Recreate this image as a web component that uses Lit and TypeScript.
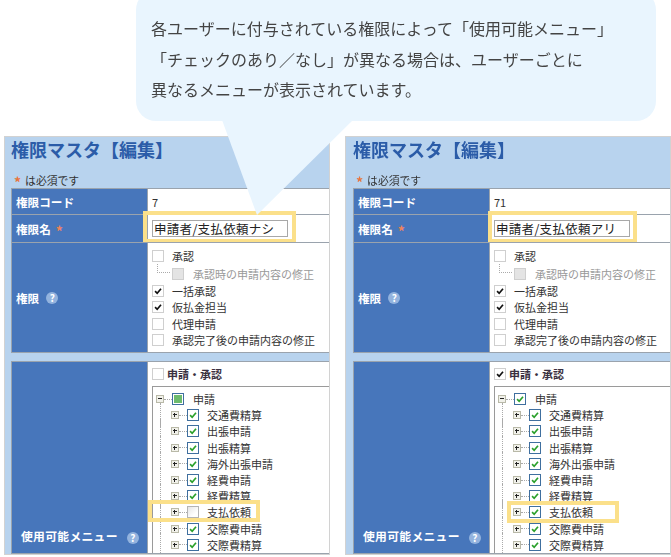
import { LitElement, html, css, svg } from "lit";

const check = svg`<path d="M2.5 6.2 L5 8.8 L9.6 3.2" fill="none" stroke-width="2"/>`;

const PERMS = [
  { label: "承認", checked: false, sub: false, dim: false },
  { label: "承認時の申請内容の修正", checked: false, sub: true, dim: true },
  { label: "一括承認", checked: true, sub: false, dim: false },
  { label: "仮払金担当", checked: true, sub: false, dim: false },
  { label: "代理申請", checked: false, sub: false, dim: false },
  { label: "承認完了後の申請内容の修正", checked: false, sub: false, dim: false },
];

const MENUS = [
  "交通費精算",
  "出張申請",
  "出張精算",
  "海外出張申請",
  "経費申請",
  "経費精算",
  "支払依頼",
  "交際費申請",
  "交際費精算",
];

/** <perm-panel> — one 権限マスタ edit form as it looks in the screenshot. */
export class PermPanel extends LitElement {
  static properties = {
    code: { type: String },
    name: { type: String },
    granted: { type: Boolean, reflect: true },
  };

  declare code: string;
  declare name: string;
  declare granted: boolean;

  constructor() {
    super();
    this.code = "";
    this.name = "";
    this.granted = false;
  }

  static styles = css`
    :host {
      display: block;
      width: 326px;
      height: 419px;
      box-sizing: border-box;
      background: #b8d3ee;
      border: 1px solid #d2d2d2;
      padding: 0 0 0 6px;
      overflow: hidden;
      font-family: "Noto Sans CJK JP", "Noto Sans", sans-serif;
      color: #333;
    }
    :host([granted]) {
      padding-left: 7px;
    }
    h1 {
      margin: 0;
      height: 26px;
      font-size: 18px;
      line-height: 24px;
      font-weight: 700;
      color: #2b5ca8;
    }
    .note {
      margin: 9px 0 0 3px;
      height: 16px;
      font-size: 10.8px;
      line-height: 16px;
      display: flex;
      gap: 4px;
      align-items: center;
    }
    .ast {
      color: #e8743c;
      font-weight: 700;
      font-size: 14px;
      line-height: 14px;
      height: 10px;
    }
    .row {
      display: flex;
      border: 1px solid #9aa3ad;
      border-right: 0;
      margin-top: -1px;
      background: #fff;
      position: relative;
    }
    .head {
      width: 136px;
      flex: none;
      box-sizing: border-box;
      background: #4776bb;
      color: #fff;
      font-weight: 700;
      font-size: 11.6px;
      padding-left: 4px;
      display: flex;
      align-items: center;
      gap: 5px;
      border-right: 1px solid #9aa3ad;
    }
    .head .ast {
      color: #f0835a;
    }
    .body {
      flex: 1;
      min-width: 0;
      padding-left: 4px;
      font-size: 11px;
      display: flex;
      align-items: center;
    }
    .r1 {
      height: 25px;
      margin-top: 0;
    }
    .r2 {
      height: 27px;
    }
    .name {
      width: 136px;
      height: 17px;
      box-sizing: border-box;
      border: 1px solid #a8a8a8;
      background: #fff;
      padding-left: 1px;
      font-size: 12.5px;
      line-height: 15px;
      letter-spacing: 0.3px;
      white-space: nowrap;
      color: #222;
    }
    .r3 {
      height: 109px;
    }
    .perms {
      flex-direction: column;
      align-items: flex-start;
      justify-content: flex-start;
      padding-top: 5px;
    }
    .perm {
      display: flex;
      align-items: center;
      height: 16.4px;
      gap: 8px;
      white-space: nowrap;
    }
    .perm.sub {
      margin-left: 20px;
      height: 18.4px;
      gap: 9px;
      position: relative;
    }
    .perm.sub::before {
      content: "";
      position: absolute;
      left: -15px;
      top: 0;
      width: 12px;
      height: 8px;
      border-left: 1px dotted #aaa;
      border-bottom: 1px dotted #aaa;
    }
    .perm.dim {
      color: #999;
    }
    .cb {
      width: 12px;
      height: 12px;
      box-sizing: border-box;
      border: 1px solid #cfcfcf;
      background: #fff;
      flex: none;
      display: block;
    }
    .cb.dis {
      background: #e4e4e4;
    }
    .cb svg {
      display: block;
      width: 10px;
      height: 10px;
      stroke: #111;
    }
    .gap {
      height: 8px;
    }
    .r4 {
      height: 191px;
      margin-top: 0;
    }
    .r4 .head {
      align-items: flex-end;
      padding: 0 0 9px 9px;
      font-size: 11.8px;
      letter-spacing: 0.3px;
      gap: 7px;
    }
    .menu {
      flex-direction: column;
      align-items: stretch;
      padding-top: 5px;
      overflow: hidden;
    }
    .group {
      display: flex;
      align-items: center;
      gap: 3px;
      height: 14px;
      margin-bottom: 5px;
      font-weight: 700;
      font-size: 11px;
      color: #3a3040;
    }
    .tree {
      flex: 1;
      border: 1px solid #9a9a9a;
      border-right: 0;
      border-bottom: 0;
      padding-top: 4px;
    }
    .node {
      display: flex;
      align-items: center;
      height: 16.2px;
      white-space: nowrap;
      position: relative;
    }
    .node.top {
      padding-left: 3px;
    }
    .node.top .lbl {
      margin-left: 9px;
    }
    .node.child {
      padding-left: 18px;
    }
    .node.child::before {
      content: "";
      position: absolute;
      left: 7px;
      top: -4px;
      bottom: -4px;
      border-left: 1px dotted #aaa;
    }
    .exp {
      width: 8px;
      height: 8px;
      box-sizing: border-box;
      border: 1px solid #b9b9a8;
      background: #f1f1ea;
      position: relative;
      flex: none;
    }
    .exp::before {
      content: "";
      position: absolute;
      left: 1px;
      right: 1px;
      top: 2px;
      height: 1px;
      background: #222;
    }
    .exp.plus::after {
      content: "";
      position: absolute;
      top: 1px;
      bottom: 1px;
      left: 2px;
      width: 1px;
      background: #222;
    }
    .dots {
      width: 8px;
      flex: none;
      border-top: 1px dotted #aaa;
    }
    .tc {
      width: 12px;
      height: 12px;
      box-sizing: border-box;
      border: 1px solid #3f6f9f;
      background: #fff;
      flex: none;
      display: flex;
      align-items: center;
      justify-content: center;
    }
    .tc.off {
      border-color: #b4b4b4;
      background: linear-gradient(135deg, #e6e6e6, #fff 70%);
    }
    .tc svg {
      display: block;
      width: 10px;
      height: 10px;
      stroke: #2aa02a;
    }
    .tc i {
      display: block;
      width: 8px;
      height: 8px;
      background: #6dbb6d;
    }
    .lbl {
      margin-left: 8px;
    }
    .help {
      width: 12px;
      height: 12px;
      border-radius: 50%;
      background: #93b3de;
      color: #fff;
      font-size: 10px;
      line-height: 12px;
      text-align: center;
      font-weight: 700;
      flex: none;
      margin-left: 2px;
      letter-spacing: 0;
    }
    .hl {
      position: absolute;
      box-sizing: border-box;
      border: 4px solid #fbe08a;
      pointer-events: none;
    }
    .hl.name-off {
      left: 131px;
      top: -4px;
      width: 153px;
      height: 32px;
    }
    .hl.name-on {
      left: 134px;
      top: -4px;
      width: 149px;
      height: 32px;
    }
    .hl.menu-off {
      left: 136px;
      top: 138px;
      width: 112px;
      height: 22px;
    }
    .hl.menu-on {
      left: 153px;
      top: 139px;
      width: 112px;
      height: 22px;
    }
  `;

  private renderPerm(p: (typeof PERMS)[number]) {
    return html`<div class="perm ${p.sub ? "sub" : ""} ${p.dim ? "dim" : ""}">
      <span class="cb ${p.dim ? "dis" : ""}"
        >${p.checked ? html`<svg viewBox="0 0 12 12">${check}</svg>` : ""}</span
      >
      <span>${p.label}</span>
    </div>`;
  }

  private renderMenu(label: string) {
    const on = this.granted || label !== "支払依頼";
    return html`<div class="node child">
      <span class="exp plus"></span><span class="dots"></span>
      <span class="tc ${on ? "" : "off"}"
        >${on ? html`<svg viewBox="0 0 12 12">${check}</svg>` : ""}</span
      >
      <span class="lbl">${label}</span>
    </div>`;
  }

  render() {
    const mode = this.granted ? "on" : "off";
    return html`
      <h1>権限マスタ【編集】</h1>
      <div class="note"><span class="ast">*</span><span>は必須です</span></div>
      <div class="row r1">
        <div class="head">権限コード</div>
        <div class="body">${this.code}</div>
      </div>
      <div class="row r2">
        <div class="head">権限名<span class="ast">*</span></div>
        <div class="body"><div class="name">${this.name}</div></div>
        <div class="hl name-${mode}"></div>
      </div>
      <div class="row r3">
        <div class="head">権限<span class="help">?</span></div>
        <div class="body perms">${PERMS.map((p) => this.renderPerm(p))}</div>
      </div>
      <div class="gap"></div>
      <div class="row r4">
        <div class="head">使用可能メニュー<span class="help">?</span></div>
        <div class="body menu">
          <div class="group">
            <span class="cb"
              >${this.granted ? html`<svg viewBox="0 0 12 12">${check}</svg>` : ""}</span
            >
            <span>申請・承認</span>
          </div>
          <div class="tree">
            <div class="node top">
              <span class="exp"></span><span class="dots"></span>
              <span class="tc"
                >${this.granted ? html`<svg viewBox="0 0 12 12">${check}</svg>` : html`<i></i>`}</span
              >
              <span class="lbl">申請</span>
            </div>
            ${MENUS.map((m) => this.renderMenu(m))}
          </div>
        </div>
        <div class="hl menu-${mode}"></div>
      </div>
    `;
  }
}
customElements.define("perm-panel", PermPanel);

export class AppRoot extends LitElement {
  static styles = css`
    :host {
      display: block;
      position: relative;
      width: 671px;
      height: 557px;
      overflow: hidden;
      background: #fff;
      font-family: "Noto Sans CJK JP", "Noto Sans", sans-serif;
    }
    .panels {
      display: flex;
      gap: 15px;
      padding: 136px 0 0 4px;
      filter: blur(0.3px);
    }
    .bubble {
      position: absolute;
      left: 136px;
      top: -10px;
      width: 520px;
      height: 131px;
      box-sizing: border-box;
      padding: 23px 0 0 15px;
      border-radius: 20px;
      background: #e9f5fe;
      color: #444;
      font-size: 16px;
      line-height: 30.6px;
      white-space: nowrap;
      filter: blur(0.25px);
    }
    .tail {
      position: absolute;
      left: 222px;
      top: 120px;
      width: 131px;
      height: 95px;
      display: block;
    }
  `;

  render() {
    return html`
      <div class="panels">
        <perm-panel code="7" name="申請者/支払依頼ナシ"></perm-panel>
        <perm-panel code="71" name="申請者/支払依頼アリ" granted></perm-panel>
      </div>
      <div class="bubble">
        各ユーザーに付与されている権限によって「使用可能メニュー」<br />
        「チェックのあり／なし」が異なる場合は、ユーザーごとに<br />
        異なるメニューが表示されています。
      </div>
      <svg class="tail" viewBox="0 0 131 95"><polygon points="0,0 131,0 35,95" fill="#e9f5fe" /></svg>
    `;
  }
}
customElements.define("app-root", AppRoot);
